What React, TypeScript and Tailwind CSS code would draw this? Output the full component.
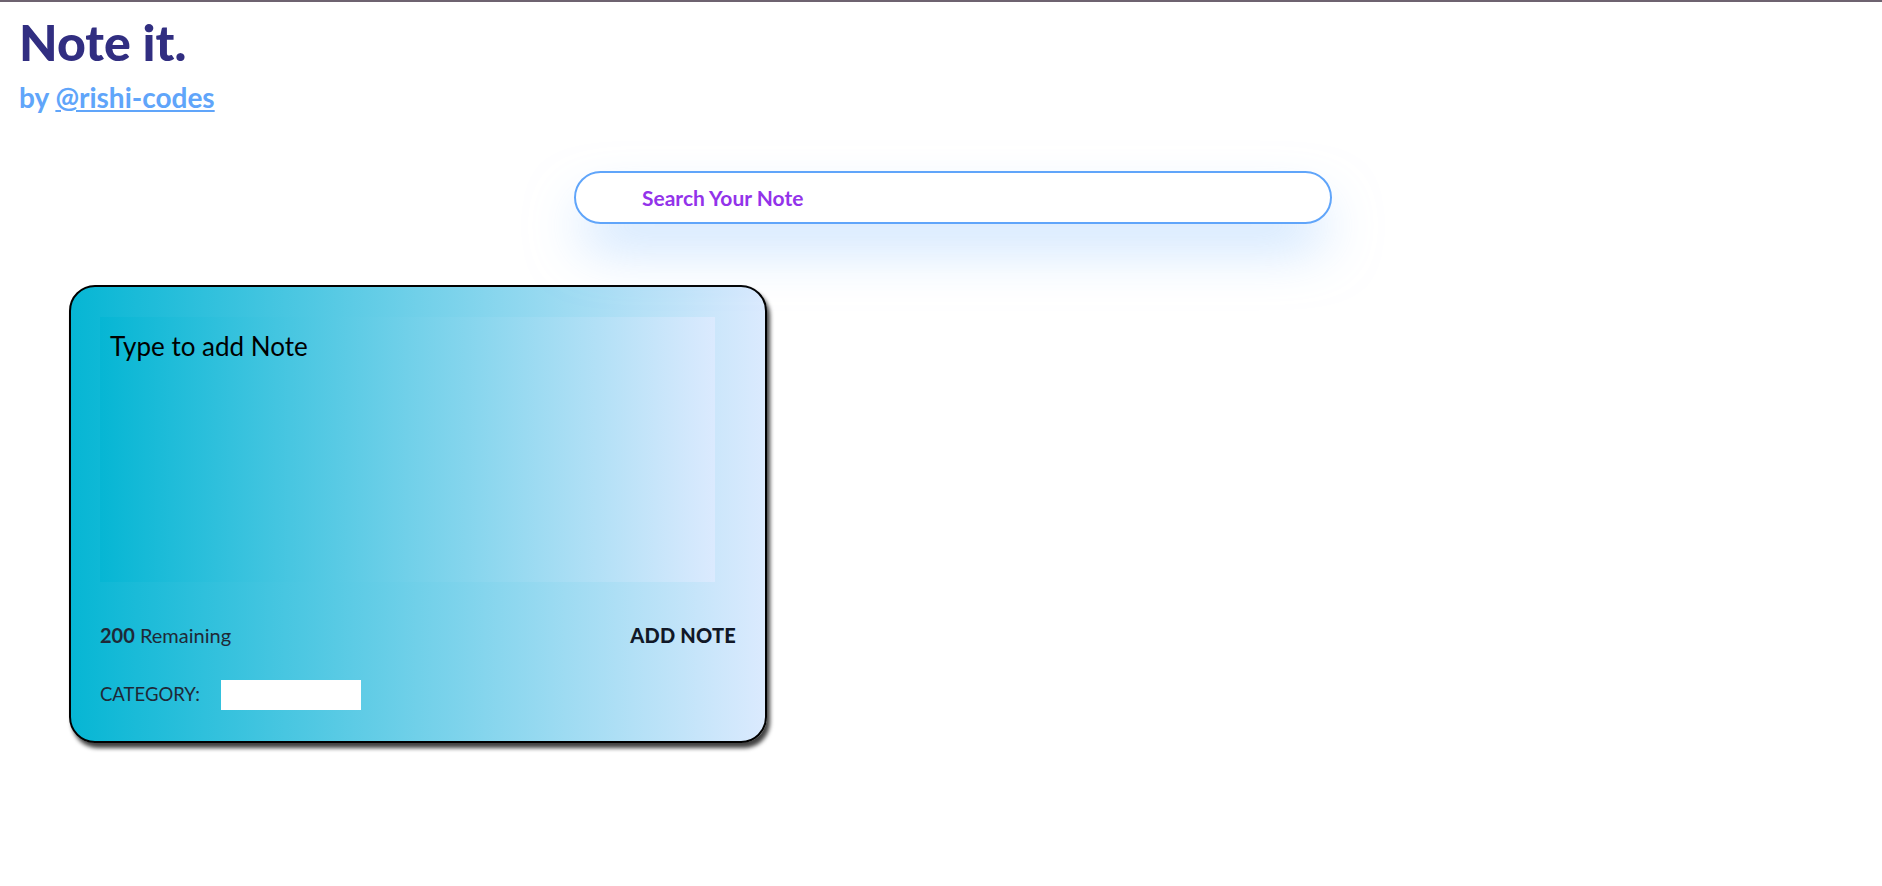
import React, { useState } from "react";

const font = { fontFamily: "Lato, 'Open Sans', sans-serif" };

export default function App() {
  const [note, setNote] = useState("");
  const [search, setSearch] = useState("");
  const [category, setCategory] = useState("");
  const limit = 200;

  return (
    <div className="min-h-screen bg-white border-t-2 border-[#6e6370]" style={font}>
      <header className="pl-[19px] pt-[14px]">
        <h1 className="text-[50px] leading-[52px] font-black text-[#312e81]">Note it.</h1>
        <h3 className="mt-[14px] text-[28px] leading-[30px] font-bold text-[#60a5fa]">
          by{" "}
          <a href="#" className="underline">
            @rishi-codes
          </a>
        </h3>
      </header>

      <div className="flex justify-center pl-[24px] mt-[59px]">
        <input
          value={search}
          onChange={(e) => setSearch(e.target.value)}
          placeholder="Search Your Note"
          className="w-[758px] h-[53px] rounded-full border-2 border-[#60a5fa] bg-white pl-[66px] text-[21px] font-bold text-[#9333ea] placeholder:text-[#9333ea] outline-none shadow-[0_28px_55px_-8px_rgba(147,197,253,0.6)]"
        />
      </div>

      <div className="ml-[69px] mt-[61px] w-[698px] h-[458px] rounded-[26px] border-2 border-black bg-[linear-gradient(to_right,#06b6d4,#dbeafe)] shadow-[3px_5px_4px_rgba(0,0,0,0.75)] pl-[29px] pr-[29px] pt-[30px]">
        <textarea
          value={note}
          onChange={(e) => setNote(e.target.value.slice(0, limit))}
          placeholder="Type to add Note"
          className="block w-[615px] h-[265px] resize-none bg-[linear-gradient(to_right,#06b6d4,#dbeafe)] px-[10px] pt-[12px] text-[26px] leading-[34px] text-black placeholder:text-black outline-none"
        />
        <div className="mt-[38px] flex items-center justify-between text-[20px] text-[#1f2937]">
          <span>
            <b>{limit - note.length}</b> Remaining
          </span>
          <button className="font-black text-[20px] text-[#111827] tracking-[0.2px]">ADD NOTE</button>
        </div>
        <div className="mt-[30px] flex items-center text-[18.5px] text-[#1f2937]">
          <span>CATEGORY:</span>
          <input
            value={category}
            onChange={(e) => setCategory(e.target.value)}
            className="ml-[21px] w-[140px] h-[30px] border-0 bg-white outline-none px-1 text-[16px]"
          />
        </div>
      </div>
    </div>
  );
}
